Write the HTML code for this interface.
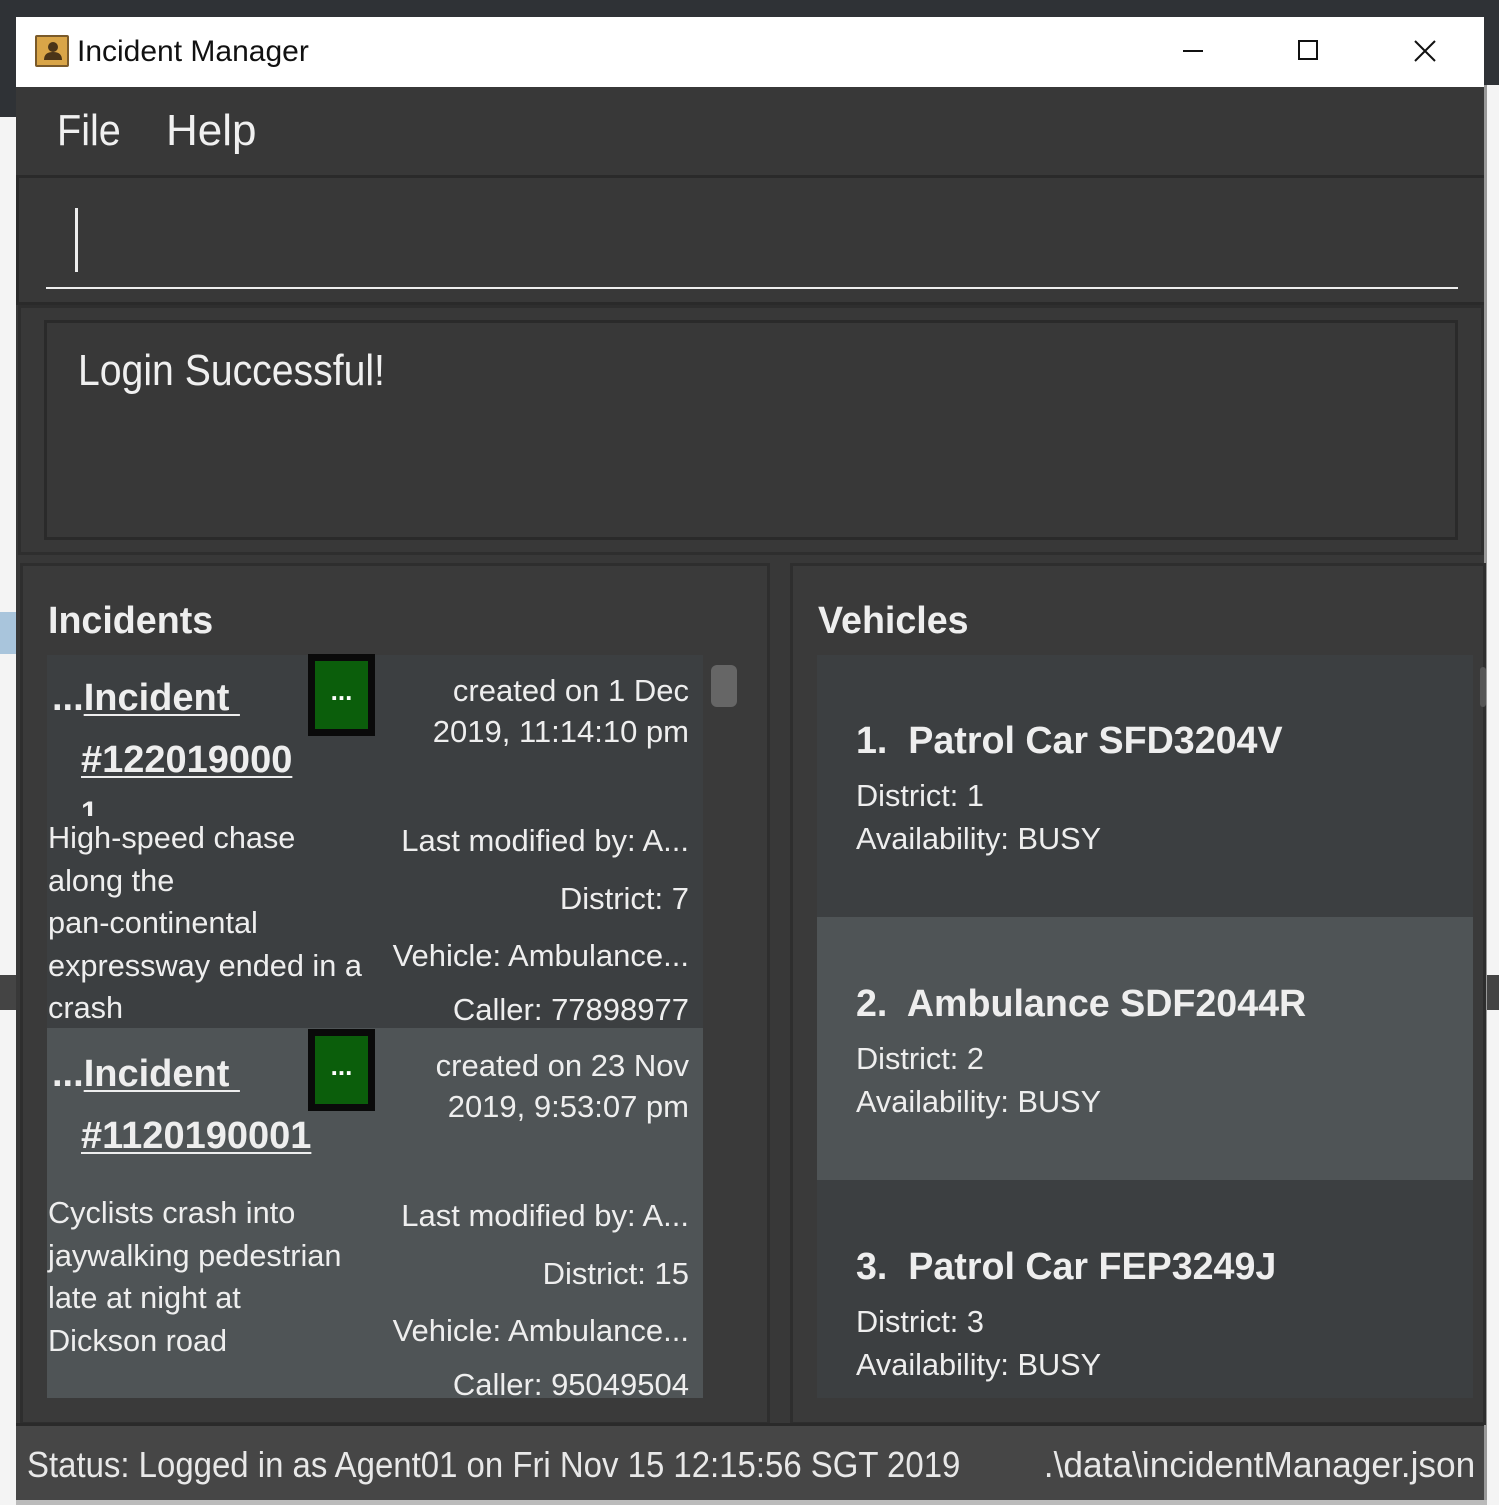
<!DOCTYPE html>
<html><head><meta charset="utf-8"><style>
*{margin:0;padding:0;box-sizing:border-box}
body{width:1499px;height:1505px;position:relative;overflow:hidden;background:#f4f4f4;font-family:"Liberation Sans",sans-serif;color:#eee}
.a{position:absolute;white-space:nowrap}
.n{transform:scaleX(.99);transform-origin:left top}
.r{transform:scaleX(1);transform-origin:right top;text-align:right}
.t{font-size:31px;line-height:36px}
.b{font-weight:bold}
.h{transform:scaleX(1);transform-origin:left top}
u{text-decoration-thickness:2px;text-underline-offset:4px}
.btn{position:absolute;width:67px;height:82px;background:#0a0a0a}
.btn div{position:absolute;left:7px;top:7px;width:53px;height:68px;background:#0b5e0b;color:#fff;font-weight:bold;font-size:26px;text-align:center;line-height:60px}
</style></head><body>
<div class="a" style="left:0;top:0;width:1499px;height:17px;background:#2f3236"></div>
<div class="a" style="left:1484px;top:0;width:15px;height:85px;background:#2f3236"></div>
<div class="a" style="left:0;top:0;width:16px;height:117px;background:#2f3236"></div>
<div class="a" style="left:0;top:612px;width:16px;height:42px;background:#a9c5dc"></div>
<div class="a" style="left:0;top:975px;width:16px;height:35px;background:#444"></div>
<div class="a" style="left:1484px;top:975px;width:15px;height:35px;background:#444"></div>
<div class="a" style="left:1484px;top:85px;width:3px;height:1420px;background:#999"></div>
<div class="a" style="left:16px;top:1500px;width:1471px;height:5px;background:#bbb"></div>
<!-- title bar -->
<div class="a" style="left:16px;top:17px;width:1468px;height:70px;background:#fff"></div>
<div class="a" style="left:35px;top:35px;width:34px;height:32px;background:#d9a548;border:2px solid #7a5a2a;border-radius:2px"></div>
<svg class="a" style="left:40px;top:38px" width="26" height="26"><circle cx="13" cy="9" r="5" fill="#4a3418"/><path d="M4 22 Q4 14 13 14 Q22 14 22 22Z" fill="#4a3418"/></svg>
<div class="a" style="left:77px;top:35px;font-size:30px;color:#111">Incident Manager</div>
<div class="a" style="left:1183px;top:50px;width:20px;height:2px;background:#111"></div>
<div class="a" style="left:1298px;top:40px;width:20px;height:20px;border:2px solid #111"></div>
<svg class="a" style="left:1414px;top:40px" width="22" height="22"><path d="M1 1L21 21M21 1L1 21" stroke="#111" stroke-width="2"/></svg>
<!-- main window -->
<div class="a" style="left:16px;top:87px;width:1468px;height:1413px;background:#383838"></div>
<div class="a" style="left:57px;top:106px;font-size:44px;color:#f0f0f0;transform:scaleX(.9);transform-origin:left top">File</div>
<div class="a" style="left:166px;top:106px;font-size:44px;color:#f0f0f0">Help</div>
<div class="a" style="left:16px;top:175px;width:1468px;height:130px;border-top:3px solid #2a2a2a;border-bottom:3px solid #2a2a2a;border-left:3px solid #2a2a2a"></div>
<div class="a" style="left:75px;top:208px;width:3px;height:64px;background:#eee"></div>
<div class="a" style="left:46px;top:287px;width:1412px;height:2px;background:#eee"></div>
<div class="a" style="left:18px;top:305px;width:1466px;height:250px;border:3px solid #2e2e2e"></div>
<div class="a" style="left:44px;top:320px;width:1414px;height:220px;border:3px solid #2a2a2a"></div>
<div class="a" style="left:78px;top:346px;font-size:44px;color:#f0f0f0;transform:scaleX(.89);transform-origin:left top">Login Successful!</div>
<!-- panels -->
<div class="a" style="left:20px;top:563px;width:750px;height:862px;border:3px solid #2e2e2e;background:#3a3a3a"></div>
<div class="a" style="left:790px;top:563px;width:696px;height:862px;border:3px solid #2e2e2e;background:#3a3a3a"></div>
<div class="a n b" style="left:48px;top:600px;font-size:38px">Incidents</div>
<div class="a n b" style="left:818px;top:600px;font-size:38px">Vehicles</div>
<!-- incident cells -->
<div class="a" style="left:47px;top:655px;width:656px;height:373px;background:#3c3f41"></div>
<div class="a" style="left:47px;top:1028px;width:656px;height:370px;background:#4f5456"></div>
<div class="a" style="left:711px;top:665px;width:26px;height:42px;background:#666;border-radius:6px"></div>
<div class="btn" style="left:308px;top:654px"><div>...</div></div>
<div class="btn" style="left:308px;top:1029px"><div>...</div></div>
<div class="a h b" style="left:52px;top:676px;font-size:38px;line-height:44px">...<u>Incident&nbsp;</u></div>
<div class="a h b" style="left:81px;top:738px;font-size:38px;line-height:44px"><u>#122019000</u></div>
<div class="a h b" style="left:81px;top:796px;font-size:30px;height:20px;overflow:hidden">1</div>
<div class="a n t" style="left:48px;top:817px;line-height:42.5px">High-speed chase<br>along the<br>pan-continental<br>expressway ended in a<br>crash</div>
<div class="a r t" style="right:810px;top:670px;line-height:41px">created on 1 Dec<br>2019, 11:14:10 pm</div>
<div class="a r t" style="right:810px;top:823px">Last modified by: A...</div>
<div class="a r t" style="right:810px;top:881px">District: 7</div>
<div class="a r t" style="right:810px;top:938px">Vehicle: Ambulance...</div>
<div class="a r t" style="right:810px;top:992px">Caller: 77898977</div>

<div class="a h b" style="left:52px;top:1052px;font-size:38px;line-height:44px">...<u>Incident&nbsp;</u></div>
<div class="a h b" style="left:81px;top:1114px;font-size:38px;line-height:44px"><u>#1120190001</u></div>
<div class="a n t" style="left:48px;top:1192px;line-height:42.5px">Cyclists crash into<br>jaywalking pedestrian<br>late at night at<br>Dickson road</div>
<div class="a r t" style="right:810px;top:1045px;line-height:41px">created on 23 Nov<br>2019, 9:53:07 pm</div>
<div class="a r t" style="right:810px;top:1198px">Last modified by: A...</div>
<div class="a r t" style="right:810px;top:1256px">District: 15</div>
<div class="a r t" style="right:810px;top:1313px">Vehicle: Ambulance...</div>
<div class="a r t" style="right:810px;top:1367px">Caller: 95049504</div>
<!-- vehicle cells -->
<div class="a" style="left:817px;top:655px;width:656px;height:262px;background:#3c3f41"></div>
<div class="a" style="left:817px;top:917px;width:656px;height:263px;background:#4f5456"></div>
<div class="a" style="left:817px;top:1180px;width:656px;height:218px;background:#3c3f41"></div>
<div class="a" style="left:1480px;top:667px;width:6px;height:40px;background:#555;border-radius:3px"></div>
<div class="a n b" style="left:856px;top:720px;font-size:38px">1.&nbsp; Patrol Car SFD3204V</div>
<div class="a n t" style="left:856px;top:774px;line-height:43px">District: 1<br>Availability: BUSY</div>
<div class="a n b" style="left:856px;top:983px;font-size:38px">2.&nbsp; Ambulance SDF2044R</div>
<div class="a n t" style="left:856px;top:1037px;line-height:43px">District: 2<br>Availability: BUSY</div>
<div class="a n b" style="left:856px;top:1246px;font-size:38px">3.&nbsp; Patrol Car FEP3249J</div>
<div class="a n t" style="left:856px;top:1300px;line-height:43px">District: 3<br>Availability: BUSY</div>
<!-- status bar -->
<div class="a" style="left:16px;top:1423px;width:1468px;height:77px;background:#464646;border-top:3px solid #2a2a2a"></div>
<div class="a" style="left:27px;top:1444px;font-size:36px;color:#e8e8e8;transform:scaleX(.915);transform-origin:left top">Status: Logged in as Agent01 on Fri Nov 15 12:15:56 SGT 2019</div>
<div class="a" style="right:24px;top:1444px;font-size:36px;color:#e8e8e8;text-align:right;transform:scaleX(.98);transform-origin:right top">.\data\incidentManager.json</div>
</body></html>
